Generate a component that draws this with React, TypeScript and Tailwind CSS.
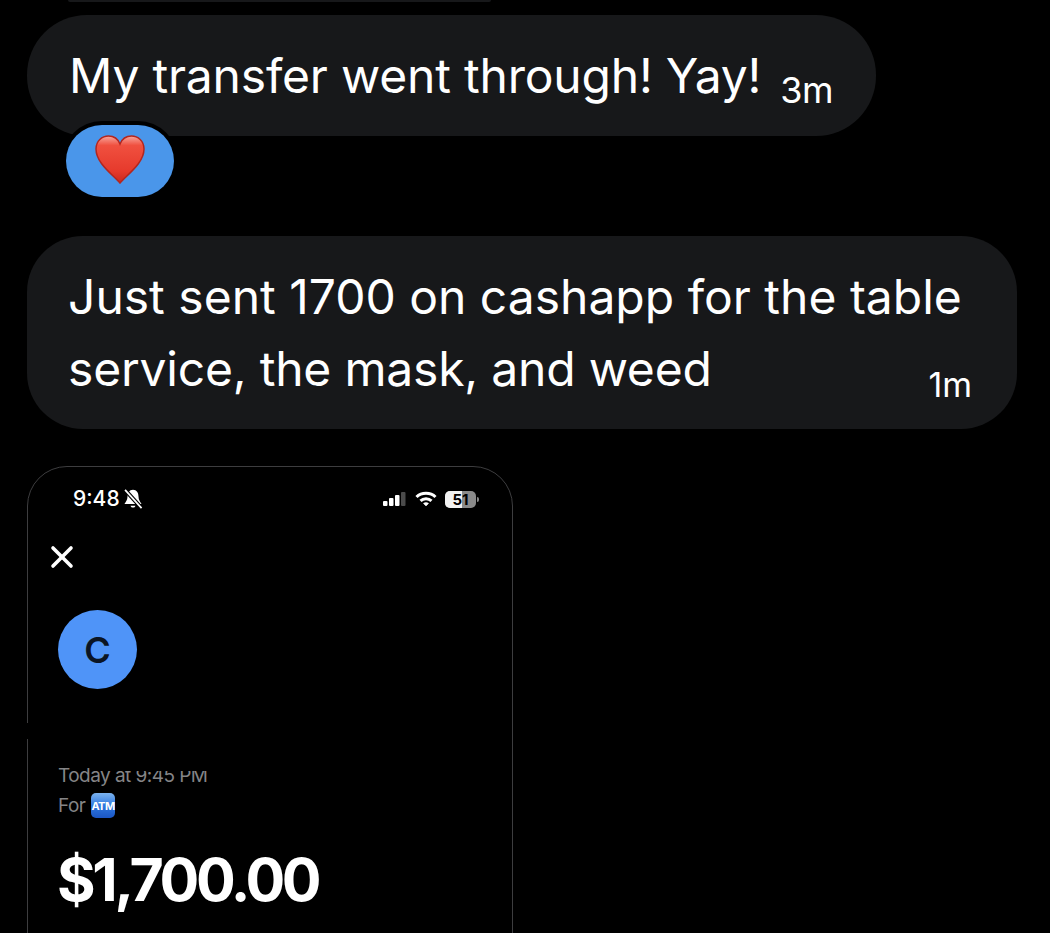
import { X } from "lucide-react";

function Heart() {
  return (
    <svg width="50" height="50" viewBox="0 0 50 50">
      <defs>
        <linearGradient id="heartFill" x1="0" y1="0" x2="0" y2="1">
          <stop offset="0" stopColor="#f8a79d" />
          <stop offset="0.2" stopColor="#f0503f" />
          <stop offset="0.75" stopColor="#e63a2c" />
          <stop offset="1" stopColor="#c9281f" />
        </linearGradient>
      </defs>
      <path
        d="M25 48 C17 39 1 28 1 14 C1 6 7 1 13.5 1 C19 1 23 4 25 9 C27 4 31 1 36.5 1 C43 1 49 6 49 14 C49 28 33 39 25 48 Z"
        fill="url(#heartFill)"
        stroke="#b3261e"
        strokeWidth="1.5"
      />
    </svg>
  );
}

function StatusIcons() {
  return (
    <div className="flex items-center">
      <svg width="24" height="16" viewBox="0 0 24 16">
        <rect x="1" y="10" width="4.5" height="5" rx="1" fill="#fff" />
        <rect x="7" y="7" width="4.5" height="8" rx="1" fill="#fff" />
        <rect x="13" y="4" width="4.5" height="11" rx="1" fill="#fff" />
        <rect x="19" y="1" width="4.5" height="14" rx="1" fill="#4a4a4a" />
      </svg>
      <svg className="ml-[9px]" width="22" height="16" viewBox="0 0 22 16" fill="none" stroke="#fff" strokeWidth="3">
        <path d="M1.5 6 C6.5 1 15.5 1 20.5 6" />
        <path d="M5.5 9.8 C8.5 7 13.5 7 16.5 9.8" />
        <path d="M11 15 L8.4 12.4 C10 11.2 12 11.2 13.6 12.4 Z" fill="#fff" strokeWidth="0.5" />
      </svg>
      <div className="ml-[8px] flex items-center gap-[1px]">
        <div className="relative w-[31px] h-[17px] rounded-[5px] overflow-hidden bg-[#8a8a8a] flex items-center justify-center">
          <div className="absolute inset-y-0 left-0 w-[17px] bg-[#f2f2f2]" />
          <span className="relative text-[15px] font-bold text-black leading-none">51</span>
        </div>
        <div className="w-[2px] h-[5px] rounded-r-sm bg-[#8a8a8a]" />
      </div>
    </div>
  );
}

export default function App() {
  return (
    <div className="w-[1050px] h-[933px] overflow-hidden bg-black text-white font-['Inter',sans-serif]">
      <div className="ml-[68px] w-[423px] h-[2px] rounded-b-full bg-[#17181a]" />

      <div className="mt-[13px] ml-[27px] w-[849px] h-[121px] rounded-[60px] bg-[#17181a] pl-[42px] pt-[30px] flex">
        <span className="text-[48px] leading-[62px] tracking-[-0.2px]">My transfer went through! Yay!</span>
        <span className="ml-[19px] mt-[25px] text-[36px] leading-[40px] tracking-[-0.5px]">3m</span>
      </div>

      <div className="relative z-10 -mt-[15px] ml-[62px] w-[116px] h-[80px] rounded-[40px] bg-black p-[4px]">
        <div className="w-full h-full rounded-[36px] bg-[#4a96ea] flex justify-center pt-[10px]">
          <Heart />
        </div>
      </div>

      <div className="mt-[35px] ml-[27px] w-[990px] h-[193px] rounded-[56px] bg-[#17181a] pl-[41px] pr-[45px] pt-[25px] relative">
        <div className="text-[48px] leading-[72px] tracking-[-0.2px]">
          <span className="tracking-normal">Just sent 1700 on cashapp for the table</span>
          <br />
          service, the mask, and weed
        </div>
        <span className="absolute right-[45px] bottom-[24px] text-[34px] leading-[40px]">1m</span>
      </div>

      <div className="relative mt-[37px] ml-[27px] w-[486px] h-[500px] rounded-t-[40px] border border-[#3d3d3f]">
        <div className="flex items-center justify-between pl-[45px] pr-[33px] pt-[20px]">
          <div className="flex items-center gap-[2px]">
            <span className="text-[21px] leading-[24px] font-medium">9:48</span>
            <svg width="22" height="22" viewBox="0 0 18 18">
              <path d="M9 1.5 C12 1.5 13.5 4 13.5 7 C13.5 10 15 11.5 16 13 L2 13 C3 11.5 4.5 10 4.5 7 C4.5 4 6 1.5 9 1.5 Z" fill="#fff" />
              <path d="M7 14.5 L11 14.5 C10.6 16.5 7.4 16.5 7 14.5 Z" fill="#fff" />
              <path d="M2.5 1.5 L16 16.5" stroke="#000" strokeWidth="3.2" />
              <path d="M2.5 1.5 L16 16.5" stroke="#fff" strokeWidth="1.4" />
            </svg>
          </div>
          <StatusIcons />
        </div>

        <X className="mt-[28px] ml-[16px]" size={36} strokeWidth={2.4} color="#fff" />

        <div className="mt-[35px] ml-[30px] w-[79px] h-[79px] rounded-full bg-[#4f94f8] flex items-center justify-center">
          <span className="text-[36px] leading-none font-semibold text-[#0b1524]">C</span>
        </div>

        {/* gap in the left edge of the picture */}
        <div className="absolute -left-[1px] top-[256px] w-[2px] h-[16px] bg-black" />

        <div className="mt-[72px] ml-[30px] text-[19px] leading-[30px] text-[#858587] tracking-[-0.55px] relative">
          <div>Today at 9:45 PM</div>
          <div className="flex items-center gap-[5px]">
            For
            <svg width="26" height="26" viewBox="0 0 26 26">
              <defs>
                <linearGradient id="atmFill" x1="0" y1="0" x2="0" y2="1">
                  <stop offset="0" stopColor="#7db4ef" />
                  <stop offset="0.5" stopColor="#2f78e0" />
                  <stop offset="1" stopColor="#1b56c4" />
                </linearGradient>
              </defs>
              <rect x="1" y="0" width="24" height="25" rx="5" fill="url(#atmFill)" />
              <text x="13" y="17" textAnchor="middle" fill="#fff" fontSize="11" fontWeight="700" fontFamily="Inter, sans-serif">ATM</text>
            </svg>
          </div>
          {/* top of the time is cut off in the picture */}
          <div className="absolute left-[67px] -top-[10px] w-[100px] h-[20px] bg-black" />
        </div>

        <div className="mt-[24px] ml-[29px] text-[59px] leading-[70px] font-bold tracking-[-3.3px]">$1,700.00</div>
      </div>
    </div>
  );
}
